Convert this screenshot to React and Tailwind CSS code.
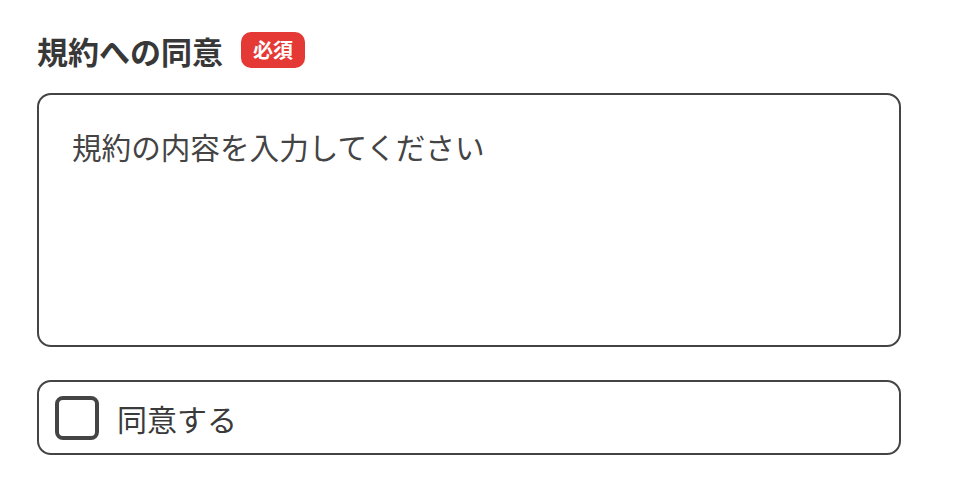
import React from 'react';

const App = () => (
  <div className="w-[955px] h-[480px] bg-white pl-[37px] pt-[32px] text-[#3a3a3a]" style={{ fontFamily: '"Noto Sans CJK JP", "Noto Sans", sans-serif' }}>
    <div className="flex items-center gap-[18px] h-[36px]">
      <h2 className="text-[31px] font-bold leading-none text-[#383838]">規約への同意</h2>
      <span className="h-[36px] px-[12px] rounded-[10px] bg-[#e53935] text-white text-[20px] font-bold flex items-center leading-none">必須</span>
    </div>
    <textarea
      className="mt-[25px] block w-[864px] h-[254px] border-2 border-[#444] rounded-[14px] px-[33px] py-[32px] text-[29.6px] leading-[40px] resize-none outline-none placeholder:text-[#444]"
      placeholder="規約の内容を入力してください"
    />
    <label className="mt-[33px] flex items-center w-[864px] h-[75px] border-2 border-[#444] rounded-[14px] pl-[16px] gap-[18px]">
      <input type="checkbox" className="sr-only" />
      <span className="w-[44px] h-[44px] border-4 border-[#444] rounded-[8px]" />
      <span className="text-[30px] leading-none">同意する</span>
    </label>
  </div>
);

export default App;
